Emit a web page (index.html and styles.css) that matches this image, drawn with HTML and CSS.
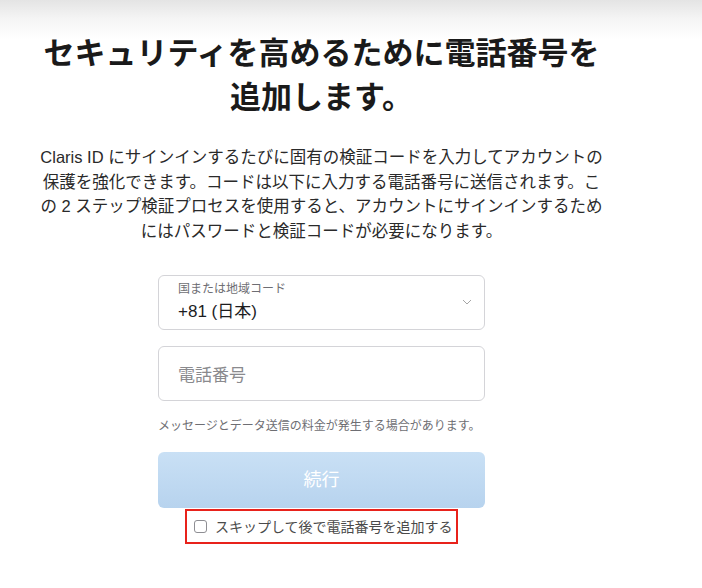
FILE: index.html
```html
<!DOCTYPE html>
<html lang="ja">
<head>
<meta charset="utf-8">
<title>電話番号を追加</title>
<link rel="stylesheet" href="styles.css">
</head>
<body>
<main class="page">
  <h1 class="title">セキュリティを高めるために電話番号を<br>追加します。</h1>
  <p class="intro">Claris ID にサインインするたびに固有の検証コードを入力してアカウントの<br>保護を強化できます。コードは以下に入力する電話番号に送信されます。こ<br>の 2 ステップ検証プロセスを使用すると、アカウントにサインインするため<br>にはパスワードと検証コードが必要になります。</p>
  <form class="form">
    <div class="select">
      <div class="select-text">
        <span class="select-label">国または地域コード</span>
        <span class="select-value">+81 (日本)</span>
      </div>
      <svg class="chevron" width="10" height="6" viewBox="0 0 10 6"><path d="M1 1l4 4 4-4" fill="none" stroke="#a6a6a6" stroke-width="1"/></svg>
    </div>
    <div class="input">電話番号</div>
    <p class="note">メッセージとデータ送信の料金が発生する場合があります。</p>
    <div class="button">続行</div>
    <div class="skip">
      <span class="checkbox"></span>
      <span class="skip-text">スキップして後で電話番号を追加する</span>
    </div>
  </form>
</main>
</body>
</html>
```

FILE: styles.css
```css
html, body {
  margin: 0;
  padding: 0;
}
body {
  background: #fff linear-gradient(#e4e4e4 0, #f4f4f4 18px, #ffffff 40px) no-repeat;
  background-size: 100% 40px;
  font-family: "Liberation Sans", "Noto Sans CJK JP", sans-serif;
  color: #1d1d1f;
  min-height: 588px;
}
.page {
  width: 643px;
  display: flex;
  flex-direction: column;
  align-items: center;
  padding-top: 29px;
}
.title {
  margin: 0;
  font-size: 31px;
  line-height: 44px;
  font-weight: 700;
  text-align: center;
  color: #1a1a1a;
  font-family: "Noto Sans CJK JP", sans-serif;
}
.intro {
  margin: 28px 0 0;
  font-size: 16.5px;
  line-height: 24.7px;
  text-align: center;
  color: #2a2a2a;
  white-space: nowrap;
}
.form {
  width: 327px;
  margin-top: 31px;
  display: flex;
  flex-direction: column;
  align-items: stretch;
}
.select {
  box-sizing: border-box;
  height: 55px;
  border: 1px solid #d4d4d8;
  border-radius: 6px;
  display: flex;
  align-items: center;
  padding: 0 12px 0 19px;
}
.select-text {
  flex: 1;
  display: flex;
  flex-direction: column;
  gap: 6px;
  padding-bottom: 1px;
}
.select-label {
  font-size: 12px;
  line-height: 14px;
  color: #6e6e73;
  font-family: "Noto Sans CJK JP", sans-serif;
}
.select-value {
  font-size: 17px;
  line-height: 22px;
  color: #1d1d1f;
}
.chevron {
  display: block;
}
.input {
  box-sizing: border-box;
  height: 55px;
  margin-top: 16px;
  border: 1px solid #d4d4d8;
  border-radius: 6px;
  padding: 0 19px;
  display: flex;
  align-items: center;
  font-size: 17px;
  color: #8a8a8e;
  font-family: "Noto Sans CJK JP", sans-serif;
}
.note {
  margin: 16px 0 0;
  font-size: 12px;
  line-height: 16px;
  color: #6e6e73;
  font-family: "Noto Sans CJK JP", sans-serif;
  white-space: nowrap;
}
.button {
  margin-top: 19px;
  height: 56px;
  border-radius: 6px;
  background: linear-gradient(#c9e0f5, #b7d3ee);
  color: #ffffff;
  font-size: 18px;
  padding-bottom: 3px;
  box-sizing: border-box;
  display: flex;
  align-items: center;
  justify-content: center;
  font-family: "Noto Sans CJK JP", sans-serif;
}
.skip {
  align-self: center;
  margin-top: 1px;
  box-sizing: border-box;
  width: 273px;
  height: 35px;
  border: 2px solid #e8221b;
  display: flex;
  align-items: center;
  gap: 8px;
  padding: 0 7px;
}
.checkbox {
  box-sizing: border-box;
  width: 13px;
  height: 13px;
  border: 1px solid #8e8e93;
  border-radius: 3px;
  background: #fff;
  flex: none;
}
.skip-text {
  font-size: 14px;
  line-height: 18px;
  color: #4a4a4a;
  font-family: "Noto Sans CJK JP", sans-serif;
  white-space: nowrap;
}
```
